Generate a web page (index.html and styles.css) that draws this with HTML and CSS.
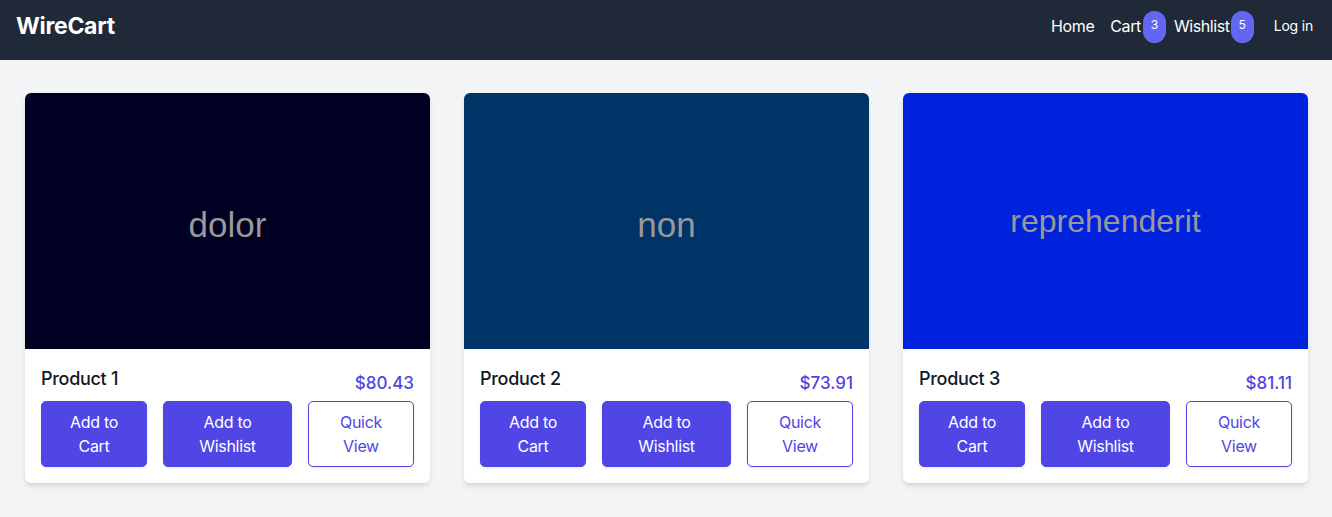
FILE: index.html
```html
<!DOCTYPE html>
<html lang="en">
<head>
<meta charset="utf-8">
<title>WireCart</title>
<link rel="stylesheet" href="styles.css">
</head>
<body>
<header class="topbar">
  <a class="brand" href="#">WireCart</a>
  <nav class="nav">
    <a class="nav-link" href="#">Home</a>
    <a class="nav-link nav-cart" href="#">Cart<span class="badge">3</span></a>
    <a class="nav-link nav-wish" href="#">Wishlist<span class="badge">5</span></a>
    <a class="nav-login" href="#">Log in</a>
  </nav>
</header>
<main class="grid">
  <article class="card">
    <div class="thumb thumb-1"><span class="thumb-text">dolor</span></div>
    <div class="card-body">
      <div class="card-head">
        <h3 class="title">Product 1</h3>
        <span class="price">$80.43</span>
      </div>
      <div class="actions">
        <button class="btn btn-primary">Add to Cart</button>
        <button class="btn btn-primary">Add to Wishlist</button>
        <button class="btn btn-outline">Quick View</button>
      </div>
    </div>
  </article>
  <article class="card">
    <div class="thumb thumb-2"><span class="thumb-text">non</span></div>
    <div class="card-body">
      <div class="card-head">
        <h3 class="title">Product 2</h3>
        <span class="price">$73.91</span>
      </div>
      <div class="actions">
        <button class="btn btn-primary">Add to Cart</button>
        <button class="btn btn-primary">Add to Wishlist</button>
        <button class="btn btn-outline">Quick View</button>
      </div>
    </div>
  </article>
  <article class="card">
    <div class="thumb thumb-3"><span class="thumb-text small">reprehenderit</span></div>
    <div class="card-body">
      <div class="card-head">
        <h3 class="title">Product 3</h3>
        <span class="price">$81.11</span>
      </div>
      <div class="actions">
        <button class="btn btn-primary">Add to Cart</button>
        <button class="btn btn-primary">Add to Wishlist</button>
        <button class="btn btn-outline">Quick View</button>
      </div>
    </div>
  </article>
</main>
</body>
</html>
```
FILE: styles.css
```css
* { box-sizing: border-box; }
html, body { margin: 0; padding: 0; }
body {
  background: #f3f4f6;
  font-family: "Inter", "Lato", sans-serif;
  color: #111827;
  width: 1332px;
  height: 517px;
  overflow: hidden;
}
a { text-decoration: none; color: inherit; }

.topbar {
  height: 60px;
  background: #1f2937;
  display: flex;
  align-items: center;
  justify-content: space-between;
  padding: 0 19px 0 16px;
  color: #fff;
}
.brand {
  font-size: 23px;
  font-weight: 700;
  letter-spacing: -0.3px;
  margin-top: -8px;
}
.nav {
  display: flex;
  align-items: center;
  margin-top: -9px;
}
.nav-link {
  display: flex;
  align-items: center;
  font-size: 16px;
  color: #fff;
  letter-spacing: -0.4px;
}
.nav-cart { margin-left: 16px; }
.nav-wish { margin-left: 8px; }
.badge {
  display: block;
  width: 23px;
  height: 32px;
  border-radius: 12px;
  background: #6366f1;
  color: #fff;
  font-size: 12px;
  line-height: 16px;
  padding-top: 6px;
  text-align: center;
  margin-left: 2px;
  margin-top: 2px;
  letter-spacing: 0;
}
.nav-wish .badge { margin-left: 1px; }
.nav-login {
  margin-left: 20px;
  font-size: 14px;
  color: #fff;
  letter-spacing: -0.2px;
}

.grid {
  display: grid;
  grid-template-columns: repeat(3, 1fr);
  gap: 34px;
  padding: 33px 24px 0 25px;
}
.card {
  background: #fff;
  border-radius: 6px;
  overflow: hidden;
  box-shadow: 0 4px 6px -1px rgba(0,0,0,0.1), 0 2px 4px -2px rgba(0,0,0,0.1);
}
.thumb {
  height: 256px;
  display: flex;
  align-items: center;
  justify-content: center;
}
.thumb-1 { background: #000022; }
.thumb-2 { background: #003366; }
.thumb-3 { background: #0022dd; }
.thumb-text {
  font-family: "Liberation Sans", Arial, sans-serif;
  color: #999999;
  font-size: 35px;
  margin-top: 7px;
}
.thumb-text.small { font-size: 32px; margin-top: 1px; }

.card-body { padding: 16px; }
.card-head {
  display: flex;
  justify-content: space-between;
  align-items: flex-end;
  height: 28px;
}
.title {
  margin: 0;
  font-size: 18px;
  line-height: 28px;
  font-weight: 500;
  color: #111827;
  letter-spacing: -0.3px;
}
.price {
  font-size: 17px;
  line-height: 20px;
  color: #4f46e5;
  font-weight: 500;
}
.actions {
  display: grid;
  grid-template-columns: 106fr 129fr 106fr;
  gap: 16px;
  margin-top: 8px;
}
.btn {
  font-family: inherit;
  font-size: 16px;
  line-height: 24px;
  height: 66px;
  padding: 8px 12px;
  border-radius: 5px;
  border: 1px solid #4f46e5;
  box-shadow: 0 1px 3px rgba(0,0,0,0.1);
  letter-spacing: -0.3px;
}
.btn-primary { background: #4f46e5; color: #fff; }
.btn-outline { background: #fff; color: #4f46e5; }
```
